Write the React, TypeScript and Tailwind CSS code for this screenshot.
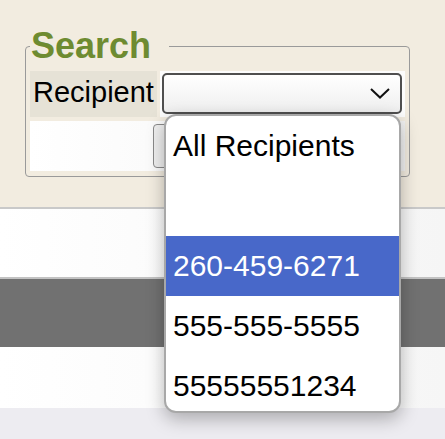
import React from "react";

export default function App() {
  const options = ["All Recipients", "", "260-459-6271", "555-555-5555", "55555551234"];
  return (
    <div className="relative flex h-[439px] w-full flex-col overflow-hidden font-['Liberation_Sans',Arial,sans-serif] text-black">
      <div className="h-[207px] bg-[#f2ece0] pl-[25px] pt-[25px]">
        <fieldset className="w-[385px] rounded-[4px] border border-[#9a9a9a] px-[4px] pb-[5px]">
          <legend className="pl-[1px] pr-[18px] text-[36px] font-bold leading-[normal] text-[#6e8b31]">
            Search
          </legend>
          <div className="mt-[4px] flex gap-[3px]">
            <div className="flex h-[46px] w-[127px] items-center bg-[#e6e2d6] pb-[3px] pl-[3px] text-[29px] leading-[normal]">
              Recipient
            </div>
            <div className="h-[46px] flex-1 bg-[#fcfcfc] pl-[2px] pr-[3px] pt-[2px]">
              <div className="flex h-[41px] items-center justify-end rounded-[5px] border-2 border-[#4f4f4f] bg-gradient-to-b from-white to-[#efefef] pr-[10px]">
                <svg width="20" height="11" viewBox="0 0 20 11">
                  <polyline points="1,1 10,9.5 19,1" fill="none" stroke="#111" strokeWidth="2" />
                </svg>
              </div>
            </div>
          </div>
          <div className="mt-[4px] flex h-[50px] items-center justify-center bg-gradient-to-r from-white to-[#f2f2f2]">
            <button aria-label="Search" className="h-[44px] w-[130px] rounded-[4px] border border-[#8a8a8a] bg-[#efefef]" />
          </div>
        </fieldset>
      </div>
      <div className="h-[2px] bg-[#c9c9c9]" />
      <div className="h-[68px] bg-gradient-to-r from-white to-[#f5f5f5]" />
      <div className="h-[2px] bg-[#c2c2c2]" />
      <div className="h-[68px] bg-[#717171]" />
      <div className="h-[61px] bg-gradient-to-r from-white to-[#f6f6f6]" />
      <div className="flex-1 bg-[#edecf1]" />

      <div className="absolute left-[164px] top-[114px] h-[299px] w-[237px] overflow-hidden rounded-[12px] border-2 border-[#a8a8a8] bg-white shadow-[0_6px_18px_rgba(0,0,0,0.28)]">
        {options.map((o, i) => (
          <div
            key={i}
            className={
              i === 2
                ? "flex h-[60px] items-center bg-[#4868c9] pl-[7px] text-[30px] leading-[normal] text-white"
                : "flex h-[60px] items-center pl-[7px] text-[30px] leading-[normal] text-black"
            }
          >
            {o}
          </div>
        ))}
      </div>
    </div>
  );
}
